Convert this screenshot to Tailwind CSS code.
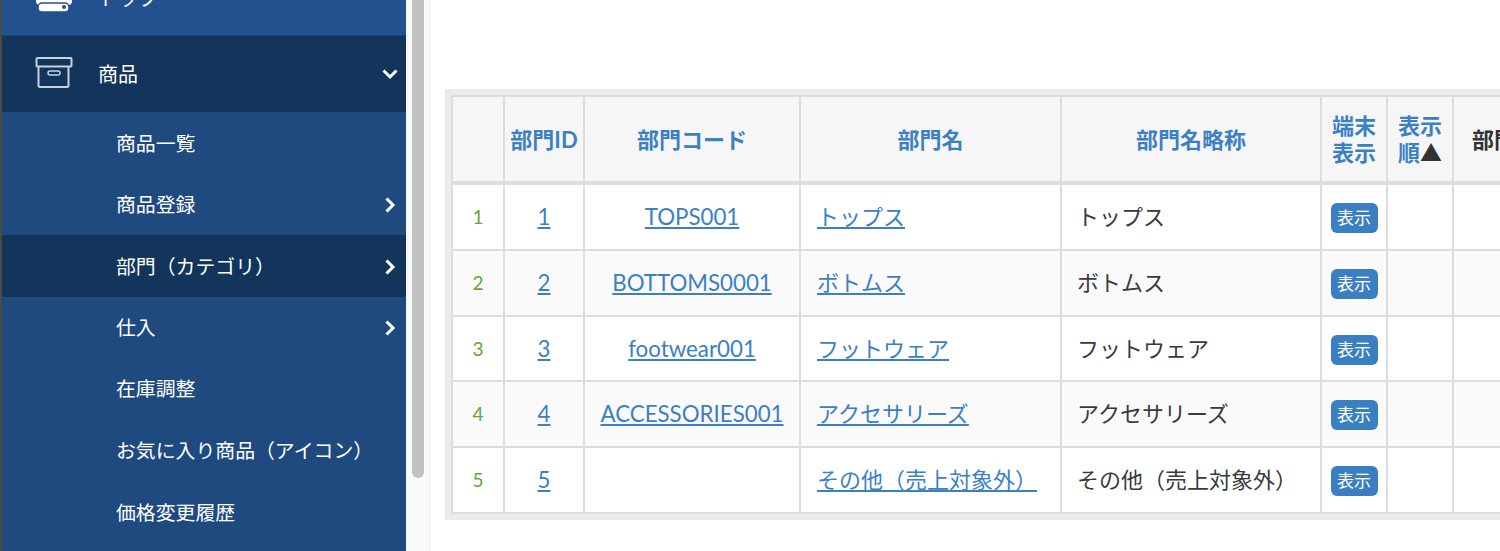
<!DOCTYPE html>
<html>
  <head>
    <meta charset="utf-8" />
    <meta name="viewport" content="width=device-width,initial-scale=1.0" />
    <title>部門（カテゴリ）</title>
    <script src="https://cdn.jsdelivr.net/npm/@tailwindcss/browser@4"></script>
  </head>
  <body class="h-[551px] w-[1500px] overflow-hidden bg-white font-['Lato','Noto_Sans_CJK_JP',sans-serif] text-[#333]">
    <div class="flex h-[551px]">
      <!-- sidebar -->
      <nav class="w-[406px] h-[551px] shrink-0 overflow-hidden border-l-2 border-[#4a4a4a] bg-[#1e4a7f] text-white">
        <div class="-mt-[40px] flex h-[76px] items-center bg-[#21528f] border-b border-[#1b4474]">
          <svg class="ml-[33px] w-[38px] h-[40px] -mt-[6px]" viewBox="0 0 38 40" fill="#fff">
            <path d="M7 3h24v11H7z" />
            <rect x="1" y="19" width="36" height="11" rx="4" />
            <rect x="3" y="28" width="31" height="9" rx="4" stroke="#21528f" stroke-width="1.500" />
            <circle cx="29" cy="32" r="2" fill="#21528f" />
          </svg>
          <span class="ml-[25px] text-[20px]">トップ</span>
        </div>
        <div class="flex h-[76px] items-center bg-[#13355b]">
          <svg class="ml-[33px] -mt-[2px] w-[38px] h-[32px]" viewBox="0 0 38 32" fill="none" stroke="#c9d2dc" stroke-width="2">
            <rect x="1.500" y="1" width="35" height="8.500" rx="1" />
            <path d="M3.500 9.500v19a1.500 1.500 0 0 0 1.500 1.500h27a1.500 1.500 0 0 0 1.500-1.500v-19" />
            <rect x="13" y="14" width="12" height="4" rx="2" stroke-width="1.500" />
          </svg>
          <span class="ml-[25px] text-[20px] leading-none">商品</span>
          <svg class="ml-auto mr-[8px] -mt-[1px] w-[16px] h-[12px]" viewBox="0 0 16 12" fill="none" stroke="#fff" stroke-width="3"><path d="M1.500 2.500 8 9l6.500-6.500" /></svg>
        </div>
        <ul class="text-[19.880px]">
          <li class="flex h-[62px] items-center pl-[114px] pt-[2px]">商品一覧</li>
          <li class="flex h-[61px] items-center pl-[114px] pt-[1px]">商品登録
            <svg class="ml-auto mr-[10px] w-[12px] h-[16px]" viewBox="0 0 12 16" fill="none" stroke="#fff" stroke-width="3"><path d="M2.500 1.500 9 8l-6.500 6.500" /></svg>
          </li>
          <li class="flex h-[62px] items-center pl-[114px] pt-[1px] bg-[#13355b]">部門（カテゴリ）
            <svg class="ml-auto mr-[10px] w-[12px] h-[16px]" viewBox="0 0 12 16" fill="none" stroke="#fff" stroke-width="3"><path d="M2.500 1.500 9 8l-6.500 6.500" /></svg>
          </li>
          <li class="flex h-[61px] items-center pl-[114px]">仕入
            <svg class="ml-auto mr-[10px] w-[12px] h-[16px]" viewBox="0 0 12 16" fill="none" stroke="#fff" stroke-width="3"><path d="M2.500 1.500 9 8l-6.500 6.500" /></svg>
          </li>
          <li class="flex h-[62px] items-center pl-[114px]">在庫調整</li>
          <li class="flex h-[61px] items-center pl-[114px] pt-[1px]">お気に入り商品（アイコン）</li>
          <li class="flex h-[62px] items-center pl-[114px] pt-[2px]">価格変更履歴</li>
        </ul>
      </nav>

      <!-- scrollbar -->
      <div class="w-[24px] h-[551px] shrink-0 bg-[#f9f9f9] border-r border-[#eeeeee] pl-[6px]">
        <div class="w-[12px] h-[478px] rounded-b-[6px] bg-[#c1c1c1]"></div>
      </div>

      <!-- main -->
      <main class="flex-1 min-w-0 overflow-hidden pl-[15px] pt-[89px]">
        <div class="w-[1200px] border-[6px] border-[#ebebeb]">
          <table class="table-fixed border-collapse w-[1200px] text-[22.300px] leading-[1.15]">
            <colgroup>
              <col class="w-[52px]" />
              <col class="w-[80px]" />
              <col class="w-[216px]" />
              <col class="w-[261px]" />
              <col class="w-[260px]" />
              <col class="w-[66px]" />
              <col class="w-[66px]" />
              <col />
            </colgroup>
            <thead>
              <tr class="h-[87px] bg-[#f6f6f6] font-bold text-[22px] leading-[27px] text-[#3b80c4]">
                <th class="border-2 border-b-4 border-[#dddddd]"></th>
                <th class="border-2 border-b-4 border-[#dddddd] whitespace-nowrap">部門ID</th>
                <th class="border-2 border-b-4 border-[#dddddd]">部門コード</th>
                <th class="border-2 border-b-4 border-[#dddddd]">部門名</th>
                <th class="border-2 border-b-4 border-[#dddddd]">部門名略称</th>
                <th class="border-2 border-b-4 border-[#dddddd]">端末<br />表示</th>
                <th class="border-2 border-b-4 border-[#dddddd]">表示<br />順<span class="text-[#333]">▲</span></th>
                <th class="border-2 border-b-4 border-[#dddddd] text-[#333] text-left pl-[18px] whitespace-nowrap">部門表示</th>
              </tr>
            </thead>
            <tbody>
              <tr class="h-[67px]">
                <td class="border-2 border-[#dddddd] text-center text-[19px] text-[#5fa838]">1</td>
                <td class="border-2 border-[#dddddd] text-center"><a class="text-[#3b80c4] underline" href="#">1</a></td>
                <td class="border-2 border-[#dddddd] text-center"><a class="text-[#3b80c4] underline" href="#">TOPS001</a></td>
                <td class="border-2 border-[#dddddd] pl-[16px] text-[22px]"><a class="text-[#3b80c4] underline" href="#">トップス</a></td>
                <td class="border-2 border-[#dddddd] pl-[15px] text-[22px] text-[#3a3a3a]">トップス</td>
                <td class="border-2 border-[#dddddd] text-center"><span class="inline-block mt-[2px] w-[47px] h-[30px] rounded-[6px] bg-[#3a7fc1] text-white text-[17px] leading-[30px] align-middle">表示</span></td>
                <td class="border-2 border-[#dddddd]"></td>
                <td class="border-2 border-[#dddddd]"></td>
              </tr>
              <tr class="h-[66px] bg-[#fafafa]">
                <td class="border-2 border-[#dddddd] text-center text-[19px] text-[#5fa838]">2</td>
                <td class="border-2 border-[#dddddd] text-center"><a class="text-[#3b80c4] underline" href="#">2</a></td>
                <td class="border-2 border-[#dddddd] text-center"><a class="text-[#3b80c4] underline" href="#">BOTTOMS0001</a></td>
                <td class="border-2 border-[#dddddd] pl-[16px] text-[22px]"><a class="text-[#3b80c4] underline" href="#">ボトムス</a></td>
                <td class="border-2 border-[#dddddd] pl-[15px] text-[22px] text-[#3a3a3a]">ボトムス</td>
                <td class="border-2 border-[#dddddd] text-center"><span class="inline-block mt-[2px] w-[47px] h-[30px] rounded-[6px] bg-[#3a7fc1] text-white text-[17px] leading-[30px] align-middle">表示</span></td>
                <td class="border-2 border-[#dddddd]"></td>
                <td class="border-2 border-[#dddddd]"></td>
              </tr>
              <tr class="h-[65px]">
                <td class="border-2 border-[#dddddd] text-center text-[19px] text-[#5fa838]">3</td>
                <td class="border-2 border-[#dddddd] text-center"><a class="text-[#3b80c4] underline" href="#">3</a></td>
                <td class="border-2 border-[#dddddd] text-center"><a class="text-[#3b80c4] underline" href="#">footwear001</a></td>
                <td class="border-2 border-[#dddddd] pl-[16px] text-[22px]"><a class="text-[#3b80c4] underline" href="#">フットウェア</a></td>
                <td class="border-2 border-[#dddddd] pl-[15px] text-[22px] text-[#3a3a3a]">フットウェア</td>
                <td class="border-2 border-[#dddddd] text-center"><span class="inline-block mt-[2px] w-[47px] h-[30px] rounded-[6px] bg-[#3a7fc1] text-white text-[17px] leading-[30px] align-middle">表示</span></td>
                <td class="border-2 border-[#dddddd]"></td>
                <td class="border-2 border-[#dddddd]"></td>
              </tr>
              <tr class="h-[66px] bg-[#fafafa]">
                <td class="border-2 border-[#dddddd] text-center text-[19px] text-[#5fa838]">4</td>
                <td class="border-2 border-[#dddddd] text-center"><a class="text-[#3b80c4] underline" href="#">4</a></td>
                <td class="border-2 border-[#dddddd] text-center"><a class="text-[#3b80c4] underline" href="#">ACCESSORIES001</a></td>
                <td class="border-2 border-[#dddddd] pl-[16px] text-[22px]"><a class="text-[#3b80c4] underline" href="#">アクセサリーズ</a></td>
                <td class="border-2 border-[#dddddd] pl-[15px] text-[22px] text-[#3a3a3a]">アクセサリーズ</td>
                <td class="border-2 border-[#dddddd] text-center"><span class="inline-block mt-[2px] w-[47px] h-[30px] rounded-[6px] bg-[#3a7fc1] text-white text-[17px] leading-[30px] align-middle">表示</span></td>
                <td class="border-2 border-[#dddddd]"></td>
                <td class="border-2 border-[#dddddd]"></td>
              </tr>
              <tr class="h-[66px]">
                <td class="border-2 border-[#dddddd] text-center text-[19px] text-[#5fa838]">5</td>
                <td class="border-2 border-[#dddddd] text-center"><a class="text-[#3b80c4] underline" href="#">5</a></td>
                <td class="border-2 border-[#dddddd]"></td>
                <td class="border-2 border-[#dddddd] pl-[16px] text-[22px]"><a class="text-[#3b80c4] underline" href="#">その他（売上対象外）</a></td>
                <td class="border-2 border-[#dddddd] pl-[15px] text-[22px] text-[#3a3a3a]">その他（売上対象外）</td>
                <td class="border-2 border-[#dddddd] text-center"><span class="inline-block mt-[2px] w-[47px] h-[30px] rounded-[6px] bg-[#3a7fc1] text-white text-[17px] leading-[30px] align-middle">表示</span></td>
                <td class="border-2 border-[#dddddd]"></td>
                <td class="border-2 border-[#dddddd]"></td>
              </tr>
            </tbody>
          </table>
        </div>
      </main>
    </div>
  </body>
</html>
